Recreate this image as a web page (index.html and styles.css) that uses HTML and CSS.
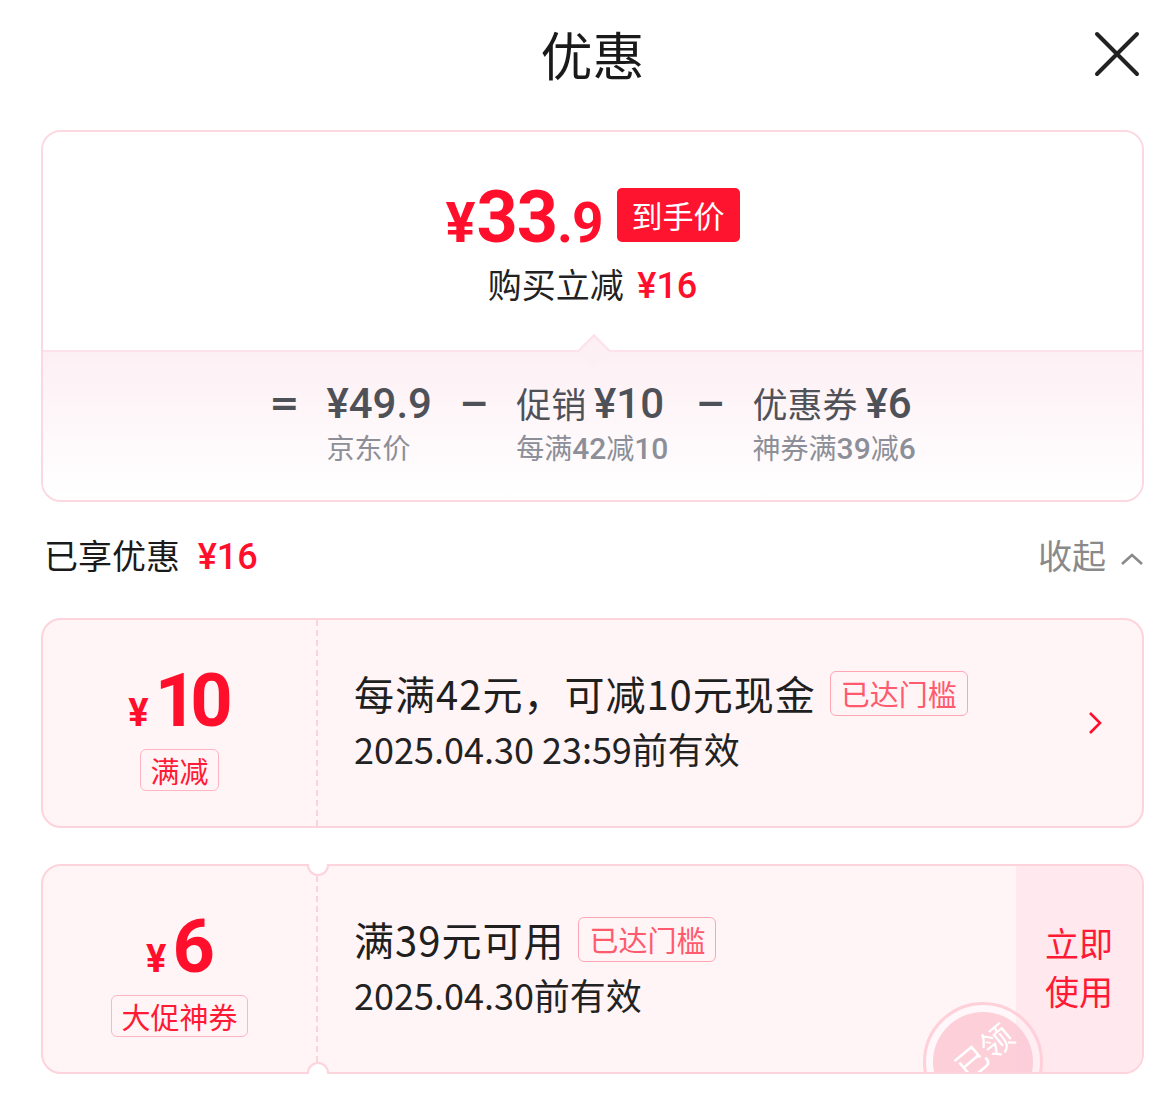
FILE: index.html
```html
<!DOCTYPE html>
<html lang="zh-CN">
<head>
    <meta charset="UTF-8">
    <meta name="viewport" content="width=device-width, initial-scale=1.0">
    <title>优惠</title>
    <link rel="stylesheet" href="styles.css">
</head>
<body>
    <div class="sheet">
        <header class="sheet-head">
            <span></span>
            <h1 class="sheet-title">优惠</h1>
            <button class="close-btn" aria-label="关闭">
                <svg width="46" height="46" viewBox="0 0 46 46">
                    <path d="M3 3 L43 43 M43 3 L3 43" stroke="#222" stroke-width="4" stroke-linecap="round" fill="none"/>
                </svg>
            </button>
        </header>

        <!-- 到手价 summary -->
        <section class="summary">
            <div class="summary-top">
                <div class="final-price">
                    <span class="price"><span class="price-sym">¥</span><span class="price-int">33</span><span class="price-dec">.9</span></span>
                    <span class="price-badge">到手价</span>
                </div>
                <p class="save-line">购买立减 <span class="red-num">¥16</span></p>
            </div>
            <div class="summary-bottom">
                <span class="tri"></span>
                <div class="formula">
                    <span class="op">=</span>
                    <div class="term">
                        <div class="term-main"><span class="num">¥49.9</span></div>
                        <div class="term-sub">京东价</div>
                    </div>
                    <span class="op">−</span>
                    <div class="term">
                        <div class="term-main">促销 <span class="num">¥10</span></div>
                        <div class="term-sub">每满<span class="num">42</span>减<span class="num">10</span></div>
                    </div>
                    <span class="op">−</span>
                    <div class="term">
                        <div class="term-main">优惠券 <span class="num">¥6</span></div>
                        <div class="term-sub">神券满<span class="num">39</span>减<span class="num">6</span></div>
                    </div>
                </div>
            </div>
        </section>

        <div class="section-head">
            <div class="section-title">已享优惠 <span class="red-num">¥16</span></div>
            <div class="collapse">收起
                <svg width="24" height="14" viewBox="0 0 24 14">
                    <path d="M2 12 L12 3 L22 12" stroke="#8a8a8a" stroke-width="2.6" fill="none"/>
                </svg>
            </div>
        </div>

        <div class="coupon-list">
            <div class="coupon-wrap">
                <div class="coupon">
                    <div class="coupon-left">
                        <div class="coupon-amount"><span class="amt-sym">¥</span><span class="amt-num">10</span></div>
                        <span class="coupon-tag">满减</span>
                    </div>
                    <div class="coupon-main">
                        <div class="coupon-info">
                            <div class="coupon-title">每满42元，可减10元现金<span class="threshold-tag">已达门槛</span></div>
                            <div class="coupon-date">2025.04.30 23:59前有效</div>
                        </div>
                        <svg class="coupon-arrow" width="14" height="24" viewBox="0 0 14 24">
                            <path d="M2 2 L12 12 L2 22" stroke="#ff0f2b" stroke-width="2.6" fill="none"/>
                        </svg>
                    </div>
                </div>
            </div>

            <div class="coupon-wrap">
                <div class="coupon">
                    <div class="coupon-left">
                        <div class="coupon-amount"><span class="amt-sym">¥</span><span class="amt-num">6</span></div>
                        <span class="coupon-tag">大促神券</span>
                    </div>
                    <div class="coupon-main">
                        <div class="coupon-info">
                            <div class="coupon-title">满39元可用<span class="threshold-tag">已达门槛</span></div>
                            <div class="coupon-date">2025.04.30前有效</div>
                        </div>
                    </div>
                    <div class="coupon-action">立即<br>使用</div>
                    <div class="stamp"><span class="stamp-inner"><span class="stamp-text">已领</span></span></div>
                </div>
                <span class="notch notch-top"></span>
                <span class="notch notch-bottom"></span>
            </div>
        </div>
    </div>
</body>
</html>
```

FILE: styles.css
```css
body {
    margin: 0;
    background: #fff;
    font-family: "Noto Sans CJK SC", "Noto Sans", sans-serif;
    color: #1a1a1a;
}

.sheet {
    padding: 0 21px 0 41px;
}

/* header */
.sheet-head {
    display: grid;
    grid-template-columns: 1fr auto 1fr;
    align-items: center;
    height: 108px;
}
.sheet-title {
    margin: 0;
    font-size: 52px;
    font-weight: 400;
    line-height: 108px;
    color: #1a1a1a;
}
.close-btn {
    justify-self: end;
    margin-right: 4px;
    padding: 0;
    border: none;
    background: none;
    width: 46px;
    height: 46px;
    display: flex;
}

/* summary card */
.summary {
    margin-top: 22px;
    border: 2px solid #fcd8e0;
    border-radius: 20px;
    overflow: hidden;
}
.summary-top {
    padding: 50px 0 46px;
    display: flex;
    flex-direction: column;
    align-items: center;
    background: #fff;
}
.final-price {
    display: flex;
    align-items: center;
    height: 72px;
}
.price {
    display: flex;
    align-items: baseline;
    height: 72px;
    font-family: Roboto, "Liberation Sans", sans-serif;
    font-weight: 700;
    color: #ff0f2b;
    line-height: 72px;
    letter-spacing: -1px;
}
.price-sym {
    font-size: 56px;
    margin-right: 2px;
}
.price-int {
    font-size: 72px;
}
.price-dec {
    font-size: 55px;
}
.price-badge {
    margin-left: 14px;
    height: 54px;
    padding: 0 15px;
    background: #ff1430;
    color: #fff;
    border-radius: 5px;
    font-size: 31px;
    line-height: 54px;
    margin-top: -6px;
}
.save-line {
    margin: 10px 0 0;
    font-size: 34px;
    line-height: 40px;
    height: 40px;
    color: #222;
}
.red-num {
    font-family: Roboto, "Liberation Sans", sans-serif;
    font-weight: 500;
    font-size: 36px;
    color: #ff0f2b;
    margin-left: 6px;
}

.summary-bottom {
    position: relative;
    border-top: 2px solid #fde2e9;
    background: linear-gradient(#fdf0f4, #fff);
    padding: 28px 0 33px;
}
.tri {
    position: absolute;
    top: -13px;
    left: 50%;
    width: 22px;
    height: 22px;
    margin-left: -11px;
    background: #fdf0f4;
    border-top: 2px solid #fde2e9;
    border-left: 2px solid #fde2e9;
    transform: rotate(45deg);
}
.formula {
    display: flex;
    justify-content: center;
    align-items: flex-start;
    gap: 27px;
    color: #4f5159;
}
.op {
    font-family: "DejaVu Sans", sans-serif;
    font-weight: 700;
    font-size: 36px;
    line-height: 46px;
    height: 46px;
}
.term-main {
    font-size: 35px;
    line-height: 46px;
    height: 46px;
    white-space: nowrap;
}
.term-main .num {
    font-family: Roboto, "Liberation Sans", sans-serif;
    font-weight: 500;
    font-size: 42px;
}
.term-sub {
    margin-top: 1px;
    font-size: 28px;
    line-height: 40px;
    height: 40px;
    color: #8c8f98;
    white-space: nowrap;
}
.term-sub .num {
    font-family: Roboto, "Liberation Sans", sans-serif;
    font-weight: 500;
    font-size: 30px;
}

/* section header */
.section-head {
    display: flex;
    justify-content: space-between;
    align-items: center;
    height: 106px;
    margin-bottom: 10px;
}
.section-title {
    margin-left: 3px;
    font-size: 34px;
    line-height: 44px;
    height: 44px;
    color: #1a1a1a;
}
.section-title .red-num {
    margin-left: 10px;
}
.collapse {
    display: flex;
    align-items: center;
    gap: 14px;
    font-size: 34px;
    line-height: 44px;
    color: #8a8a8a;
}
.collapse svg {
    margin-top: 8px;
}

/* coupons */
.coupon-list {
    display: flex;
    flex-direction: column;
    gap: 36px;
}
.coupon-wrap {
    position: relative;
}
.coupon {
    position: relative;
    display: flex;
    height: 210px;
    box-sizing: border-box;
    border: 2px solid #fdd3dc;
    border-radius: 20px;
    background: #fff4f6;
    overflow: hidden;
}
.coupon-left {
    width: 275px;
    flex-shrink: 0;
    box-sizing: border-box;
    border-right: 2px dashed #fdd3dc;
    display: flex;
    flex-direction: column;
    align-items: center;
    justify-content: center;
    padding-top: 16px;
}
.coupon-amount {
    display: flex;
    align-items: baseline;
    height: 60px;
    font-family: Roboto, "Liberation Sans", sans-serif;
    font-weight: 700;
    color: #ff0f2b;
    line-height: 60px;
}
.amt-sym {
    font-size: 38px;
    margin-right: 6px;
}
.amt-num {
    font-size: 74px;
    letter-spacing: -7px;
    margin-right: 5px;
}
.coupon-tag {
    margin-top: 18px;
    padding: 0 9px;
    border: 1px solid #ffb4c1;
    border-radius: 6px;
    font-size: 29px;
    line-height: 40px;
    color: #ff1a35;
}
.coupon-main {
    flex: 1;
    display: flex;
    align-items: center;
    padding: 0 40px 0 36px;
}
.coupon-info {
    flex: 1;
    padding-bottom: 6px;
}
.coupon-title {
    display: flex;
    align-items: center;
    font-size: 40px;
    letter-spacing: 1px;
    line-height: 54px;
    height: 54px;
    color: #1f1f1f;
}
.threshold-tag {
    margin-left: 14px;
    padding: 0 10px;
    border: 1px solid #ffa6b5;
    border-radius: 6px;
    font-size: 29px;
    letter-spacing: 0;
    line-height: 43px;
    color: #ff5a6e;
}
.coupon-date {
    margin-top: 2px;
    font-size: 36px;
    line-height: 52px;
    height: 52px;
    color: #222;
}
.coupon-action {
    width: 126px;
    flex-shrink: 0;
    display: flex;
    align-items: center;
    justify-content: center;
    text-align: center;
    padding-bottom: 4px;
    box-sizing: border-box;
    background: #ffe8ee;
    font-size: 34px;
    line-height: 48px;
    color: #ff1a35;
}

/* 已领 stamp */
.stamp {
    position: absolute;
    left: 880px;
    top: 136px;
    width: 120px;
    height: 120px;
    box-sizing: border-box;
    border: 3px solid #ffd0d9;
    border-radius: 50%;
    background: rgba(255, 255, 255, 0.3);
    display: flex;
    align-items: center;
    justify-content: center;
}
.stamp-inner {
    width: 100px;
    height: 100px;
    border-radius: 50%;
    background: rgba(252, 200, 212, 0.85);
    display: flex;
    align-items: center;
    justify-content: center;
}
.stamp-text {
    font-size: 32px;
    line-height: 36px;
    color: #fff;
    transform: translateY(-12px) rotate(-40deg);
}

.notch {
    position: absolute;
    left: 266px;
    width: 22px;
    height: 12px;
    box-sizing: border-box;
    background: #fff;
    border: 2px solid #fdd3dc;
}
.notch-top {
    top: 0;
    border-top: none;
    border-radius: 0 0 11px 11px;
}
.notch-bottom {
    bottom: 0;
    border-bottom: none;
    border-radius: 11px 11px 0 0;
}
```
